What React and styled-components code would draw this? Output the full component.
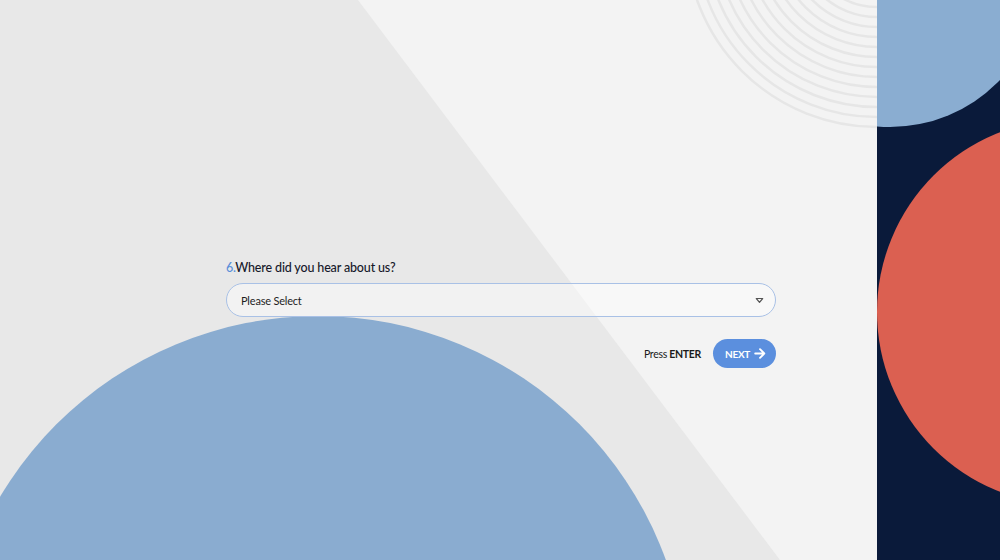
import React from "react";
import styled, { createGlobalStyle } from "styled-components";

const Global = createGlobalStyle`
  html, body { margin: 0; padding: 0; }
  body { font-family: "Lato", "Noto Sans", sans-serif; background: #e8e8e8; }
  * { box-sizing: border-box; }
`;

const Page = styled.div`
  width: 1000px;
  height: 560px;
  display: flex;
  overflow: hidden;
`;

const Main = styled.main`
  position: relative;
  flex: 1;
  height: 100%;
  background: #e8e8e8;
  padding: 259px 0 0 226px;
`;

const Backdrop = styled.svg`
  position: absolute;
  inset: 0;
  width: 100%;
  height: 100%;
`;

const Side = styled.aside`
  position: relative;
  width: 123px;
  height: 100%;
  background: #0a1a3a;
`;

const SideArt = styled.svg`
  display: block;
  width: 100%;
  height: 100%;
`;

const Form = styled.form`
  position: relative;
  width: 550px;
  display: flex;
  flex-direction: column;
`;

const Label = styled.label`
  font-size: 12.5px;
  line-height: 18px;
  font-weight: 500;
  letter-spacing: -0.15px;
  color: #16182a;
  margin-bottom: 6px;
`;

const Num = styled.span`
  color: #5b8fd9;
`;

const SelectBox = styled.div`
  height: 34px;
  border: 1px solid #a9c1e6;
  border-radius: 17px;
  background: rgba(255, 255, 255, 0.45);
  display: flex;
  align-items: center;
  justify-content: space-between;
  padding: 0 11px 0 14px;
  font-size: 11px;
  letter-spacing: -0.2px;
  color: #1e1e1e;
`;

const Actions = styled.div`
  margin-top: 22px;
  display: flex;
  justify-content: flex-end;
  align-items: center;
  gap: 12px;
`;

const Hint = styled.span`
  font-size: 10.5px;
  letter-spacing: -0.3px;
  color: #1a1a1a;
  b { font-weight: 700; }
`;

const NextButton = styled.button`
  height: 29px;
  border: none;
  border-radius: 15px;
  background: #5b8fde;
  color: #fff;
  font-family: inherit;
  font-size: 10px;
  font-weight: 700;
  letter-spacing: -0.3px;
  padding: 0 10px 0 12px;
  display: flex;
  align-items: center;
  gap: 4px;
  cursor: pointer;
`;

const rings = Array.from({ length: 14 }, (_, i) => 191 - i * 10);

export default function App() {
  return (
    <>
      <Global />
      <Page>
        <Main>
          <Backdrop viewBox="0 0 877 560" preserveAspectRatio="none">
            <polygon points="358,0 877,0 877,560 780,560" fill="#f3f3f3" />
            {rings.map((r) => (
              <circle key={r} cx="877" cy="-64" r={r} fill="none" stroke="#e6e6e6" strokeWidth="2.5" />
            ))}
            <circle cx="318" cy="686" r="370" fill="#8aacd0" />
          </Backdrop>
          <Form onSubmit={(e) => e.preventDefault()}>
            <Label>
              <Num>6.</Num>Where did you hear about us?
            </Label>
            <SelectBox>
              <span>Please Select</span>
              <svg width="9" height="7" viewBox="0 0 9 7">
                <path d="M1.3 1.5 H7.7 L4.5 5.3 Z" fill="none" stroke="#555" strokeWidth="1.2" strokeLinejoin="round" />
              </svg>
            </SelectBox>
            <Actions>
              <Hint>
                Press <b>ENTER</b>
              </Hint>
              <NextButton type="button">
                NEXT
                <svg width="12" height="11" viewBox="0 0 12 11">
                  <path d="M1.2 5.5 H10.3 M6 1.2 L10.3 5.5 L6 9.8" fill="none" stroke="#fff" strokeWidth="1.9" strokeLinecap="round" strokeLinejoin="round" />
                </svg>
              </NextButton>
            </Actions>
          </Form>
        </Main>
        <Side>
          <SideArt viewBox="0 0 123 560">
            <circle cx="13" cy="-25" r="152" fill="#8aadd1" />
            <circle cx="193" cy="312" r="193" fill="#db6051" />
          </SideArt>
        </Side>
      </Page>
    </>
  );
}
